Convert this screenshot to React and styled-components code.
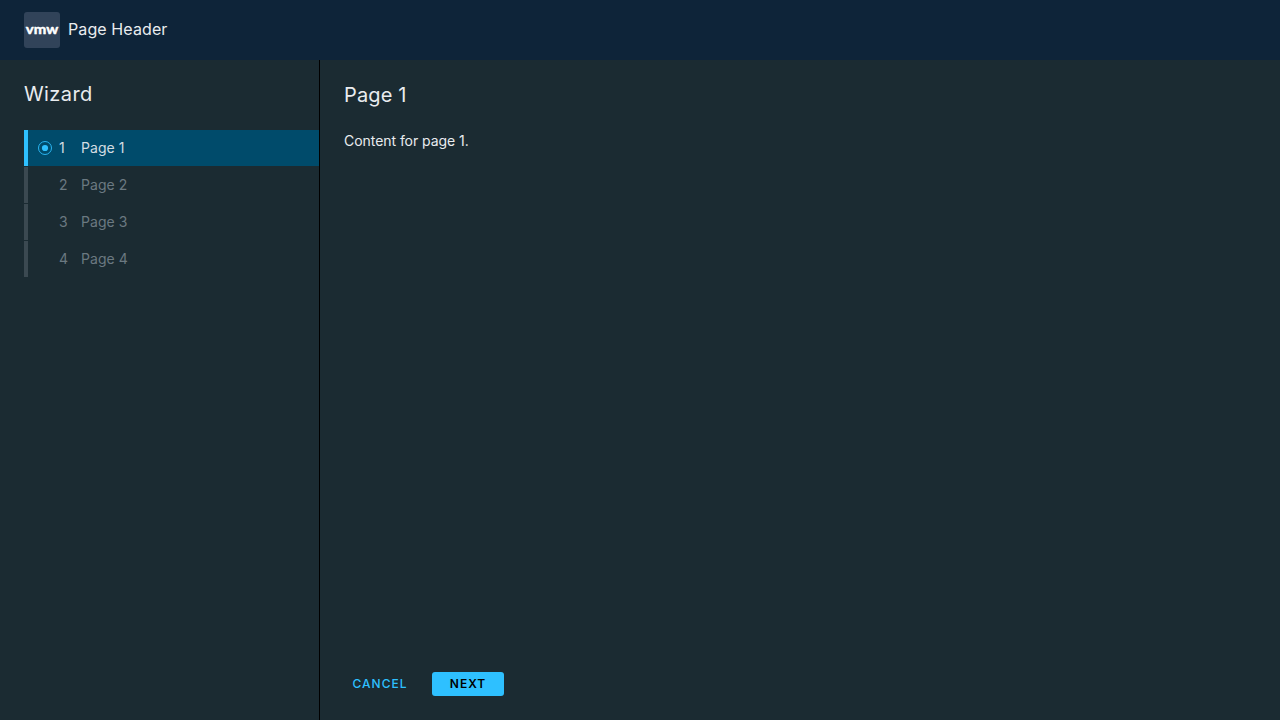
import React from "react";
import styled, { createGlobalStyle } from "styled-components";

const GlobalStyle = createGlobalStyle`
  *, *::before, *::after { box-sizing: border-box; }
  body {
    margin: 0;
    overflow: hidden;
    background: #1b2a32;
    color: #e9ecef;
    font-family: Inter, "Liberation Sans", sans-serif;
  }
`;

const Shell = styled.div`
  display: flex;
  flex-direction: column;
  height: 100vh;
`;

const Header = styled.header`
  display: flex;
  align-items: center;
  gap: 8px;
  flex: 0 0 60px;
  padding: 0 24px;
  background: #0e2439;
`;

const Logo = styled.svg`
  display: block;
  width: 36px;
  height: 36px;
`;

const HeaderTitle = styled.span`
  font-size: 16px;
  line-height: 24px;
  letter-spacing: 0.1px;
  padding-bottom: 2px;
`;

const Wizard = styled.div`
  display: flex;
  flex: 1;
  min-height: 0;
  background: #1b2b32;
`;

const StepNav = styled.nav`
  flex: 0 0 320px;
  padding: 22px 0 0 24px;
  border-right: 1px solid #000;
`;

const Title = styled.h1`
  margin: 0;
  font-size: 20px;
  font-weight: 400;
  line-height: 24px;
  letter-spacing: ${(p) => p.$tracking};
`;

const StepList = styled.ol`
  display: flex;
  flex-direction: column;
  gap: 1px;
  margin: 24px 0 0;
  padding: 0;
  list-style: none;
`;

const Step = styled.li`
  display: grid;
  grid-template-columns: 22px 22px 1fr;
  align-items: center;
  height: 36px;
  padding-left: 9px;
  border-left: 4px solid ${(p) => (p.$active ? "#2ec0ff" : "#3b4951")};
  background: ${(p) => (p.$active ? "#004b6b" : "transparent")};
  color: ${(p) => (p.$active ? "#d3dde2" : "#6b7981")};
  font-size: 14px;
  line-height: 20px;
`;

const StepIcon = styled.svg`
  width: 16px;
  height: 16px;
  grid-column: 1;
`;

const StepNumber = styled.span`
  grid-column: 2;
`;

const StepLabel = styled.span`
  grid-column: 3;
  letter-spacing: 0.05px;
`;

const Main = styled.main`
  display: flex;
  flex: 1;
  flex-direction: column;
  padding: 23px 24px 24px;
`;

const Content = styled.p`
  flex: 1;
  margin: 24px 0 0;
  font-size: 14px;
  line-height: 20px;
  letter-spacing: -0.05px;
`;

const Actions = styled.footer`
  display: flex;
  gap: 16px;
`;

const Button = styled.button`
  width: 72px;
  height: 24px;
  padding: 0;
  border: 0;
  border-radius: 3px;
  background: ${(p) => (p.$primary ? "#2ec0ff" : "transparent")};
  color: ${(p) => (p.$primary ? "#000" : "#2ec0ff")};
  font: ${(p) => (p.$primary ? 600 : 500)} 12px/24px Inter, "Liberation Sans", sans-serif;
  letter-spacing: 1px;
`;

const steps = ["Page 1", "Page 2", "Page 3", "Page 4"];

export default function App() {
  return (
    <Shell>
      <GlobalStyle />
      <Header>
        <Logo viewBox="0 0 36 36" aria-label="vmw">
          <rect width="36" height="36" rx="3" fill="#314359" />
          <text
            x="1.8" y="22" textLength="32.4" lengthAdjust="spacingAndGlyphs"
            fontFamily="Lato" fontWeight="700" fontSize="14"
            fill="#fff" stroke="#fff" strokeWidth="0.5" strokeLinejoin="round"
          >vmw</text>
        </Logo>
        <HeaderTitle>Page Header</HeaderTitle>
      </Header>
      <Wizard>
        <StepNav>
          <Title $tracking="0.4px">Wizard</Title>
          <StepList>
            {steps.map((label, i) => (
              <Step key={label} $active={i === 0}>
                {i === 0 && (
                  <StepIcon viewBox="0 0 16 16">
                    <circle cx="8" cy="8" r="6.5" fill="none" stroke="#2ec0ff" strokeWidth="0.9" />
                    <circle cx="8" cy="8" r="3.1" fill="#2ec0ff" />
                  </StepIcon>
                )}
                <StepNumber>{i + 1}</StepNumber>
                <StepLabel>{label}</StepLabel>
              </Step>
            ))}
          </StepList>
        </StepNav>
        <Main>
          <Title as="h2" $tracking="0.15px">Page 1</Title>
          <Content>Content for page 1.</Content>
          <Actions>
            <Button>CANCEL</Button>
            <Button $primary>NEXT</Button>
          </Actions>
        </Main>
      </Wizard>
    </Shell>
  );
}
